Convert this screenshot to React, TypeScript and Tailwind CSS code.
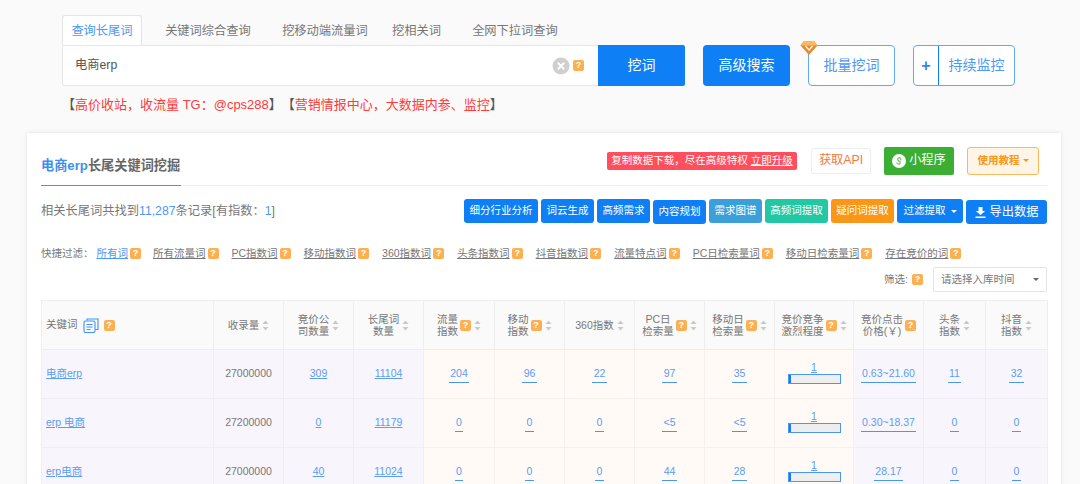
const FONT = { fontFamily: '"Liberation Sans", "Noto Sans CJK SC", sans-serif' }

const tabs = ["关键词综合查询", "挖移动端流量词", "挖相关词", "全网下拉词查询"]

const tools = [
  { label: "细分行业分析", cls: "w-[74px] bg-[#0f7ff5]" },
  { label: "词云生成", cls: "w-[53px] bg-[#0f7ff5]" },
  { label: "高频需求", cls: "w-[53px] bg-[#0f7ff5]" },
  { label: "内容规划", cls: "w-[53px] bg-[#0f7ff5] mt-px" },
  { label: "需求图谱", cls: "w-[53px] bg-[#3b9fd9]" },
  { label: "高频词提取", cls: "w-[63px] bg-[#22c7a3]" },
  { label: "疑问词提取", cls: "w-[63px] bg-[#fb9617]" },
]

const quick = [
  "所有流量词",
  "PC指数词",
  "移动指数词",
  "360指数词",
  "头条指数词",
  "抖音指数词",
  "流量特点词",
  "PC日检索量词",
  "移动日检索量词",
  "存在竞价的词",
]

const columns = [
  { w: "w-[172px]", lines: ["关键词"] },
  { w: "w-[70px]", lines: ["收录量"], sort: true },
  { w: "w-[70px]", lines: ["竞价公", "司数量"], sort: true },
  { w: "w-[70px]", lines: ["长尾词", "数量"], sort: true },
  { w: "w-[71px]", lines: ["流量", "指数"], q: true, sort: true },
  { w: "w-[70px]", lines: ["移动", "指数"], q: true, sort: true },
  { w: "w-[70px]", lines: ["360指数"], sort: true },
  { w: "w-[70px]", lines: ["PC日", "检索量"], q: true, sort: true },
  { w: "w-[70px]", lines: ["移动日", "检索量"], q: true, sort: true },
  { w: "w-[79px]", lines: ["竞价竞争", "激烈程度"], q: true, sort: true },
  { w: "w-[70px]", lines: ["竞价点击", "价格(￥)"], q: true },
  { w: "w-[62px]", lines: ["头条", "指数"], sort: true },
  { w: "w-[62px]", lines: ["抖音", "指数"], sort: true },
]

const rows = [
  { name: "电商erp", total: "27000000", bid: "309", long: "11104", idx: ["204", "96", "22", "97", "35"], price: "0.63~21.60", tail: ["11", "32"] },
  { name: "erp 电商", total: "27200000", bid: "0", long: "11179", idx: ["0", "0", "0", "<5", "<5"], price: "0.30~18.37", tail: ["0", "0"] },
  { name: "erp电商", total: "27000000", bid: "40", long: "11024", idx: ["0", "0", "0", "44", "28"], price: "28.17", tail: ["0", "0"] },
]

function Q({ className = "" }: { className?: string }) {
  return (
    <span className={"inline-flex h-[11px] w-[11px] shrink-0 items-center justify-center rounded-[2px] bg-[#fdb052] text-[9px] font-bold leading-none text-white " + className}>
      ?
    </span>
  )
}

function Sort() {
  return (
    <svg width="7" height="11" viewBox="0 0 7 11" className="ml-px shrink-0">
      <path d="M3.5 0.5 L6.5 4 H0.5 Z" fill="#c8c8c8" />
      <path d="M3.5 10.5 L6.5 7 H0.5 Z" fill="#c8c8c8" />
    </svg>
  )
}

function Num({ value }: { value: string }) {
  return <span className="inline-block border-b border-[#4b97f0] px-[1.5px] pb-[2px] leading-[13px] text-[#5a9df5]">{value}</span>
}

function Bar() {
  return (
    <div className="mx-auto flex w-[53px] flex-col items-center pb-[3px]">
      <span className="leading-[12px] text-[#5a9df5] underline">1</span>
      <div className="mt-px h-[10px] w-[53px] border border-[#4b97f0] bg-[#eeeeee]">
        <div className="h-full w-[2px] bg-[#0f7ff5]" />
      </div>
    </div>
  )
}

export default function App() {
  return (
    <div className="h-[484px] w-[1080px] overflow-hidden bg-[#fafafa] pt-[15px]" style={FONT}>
      <div className="flex items-start pl-[62px]">
        <div className="w-[623px]">
          <div className="flex h-[30px] text-[12.25px] text-[#777777]">
            <div className="flex w-[80px] items-center justify-center rounded-t-[3px] border border-b-0 border-[#e4e4e4] bg-white pt-[2px] text-[#4d97f5]">查询长尾词</div>
            <div className="flex w-[132px] items-center justify-center pt-[2px]">{tabs[0]}</div>
            <div className="flex w-[102px] items-center justify-center pt-[2px]">{tabs[1]}</div>
            <div className="flex w-[81px] items-center justify-center pt-[2px]">{tabs[2]}</div>
            <div className="flex w-[116px] items-center justify-center pt-[2px]">{tabs[3]}</div>
          </div>
          <div className="flex h-[41px]">
            <div className="flex w-[536px] items-center rounded-l-[2px] border border-r-0 border-[#e6e6e6] bg-white pl-[12px] pr-[14px] text-[12.25px] text-[#555555]">
              <span className="flex-1">电商erp</span>
              <svg width="18" height="18" viewBox="0 0 18 18">
                <circle cx="9" cy="9" r="8.5" fill="#cfcfcf" />
                <path d="M5.8 5.8 L12.2 12.2 M12.2 5.8 L5.8 12.2" stroke="#fff" strokeWidth="2" />
              </svg>
              <Q className="ml-[3px] mb-[1px]" />
            </div>
            <button className="w-[87px] rounded-r-[2px] bg-[#0f7ff5] text-[14px] text-white">挖词</button>
          </div>
        </div>
        <button className="ml-[18px] mt-[30px] h-[41px] w-[87px] rounded-[4px] bg-[#0f7ff5] text-[14px] text-white">高级搜索</button>
        <div className="relative ml-[18px] mt-[30px]">
          <svg width="18" height="16" viewBox="0 0 18 16" className="absolute -left-[8px] -top-[5px]">
            <path d="M4 1 H14 L17.5 5.5 L9 15 L0.5 5.5 Z" fill="#ea8a2c" />
            <path d="M4 1 H14 L17.5 5.5 H0.5 Z" fill="#f9b95c" />
            <path d="M5.5 6 L9 10 L12.5 6" fill="none" stroke="#fff" strokeWidth="1.2" />
          </svg>
          <button className="h-[41px] w-[87px] rounded-[4px] border border-[#63a8f7] bg-white text-[14px] text-[#4d97f5]">批量挖词</button>
        </div>
        <div className="ml-[18px] mt-[30px] flex h-[41px] w-[102px] rounded-[4px] border border-[#63a8f7] bg-white text-[14px] text-[#4d97f5]">
          <span className="flex w-[25px] items-center justify-center border-r border-[#0f7ff5] text-[16px] font-bold text-[#2f86ee]">+</span>
          <span className="flex flex-1 items-center justify-center">持续监控</span>
        </div>
      </div>

      <div className="ml-[62px] mt-[9px] h-[19px] whitespace-nowrap text-[13px] leading-[19px] text-[#ff3b3b] [text-spacing-trim:space-all]">
        <span className="text-[#555555]">【</span>高价收站，收流量 TG：@cps288<span className="text-[#555555]">】【</span>营销情报中心，大数据内参、监控<span className="text-[#555555]">】</span>
      </div>

      <div className="ml-[27px] mt-[19px] h-[360px] w-[1034px] bg-white px-[14px] shadow-[0_0_4px_rgba(0,0,0,0.1)]">
        <div className="flex h-[53px] items-center justify-between border-b border-[#eeeeee]">
          <div className="-mb-px flex h-[53px] w-[140px] shrink-0 items-center whitespace-nowrap border-b border-[#3f93f3] pt-[14px] text-[13.2px] font-bold text-[#666666]">
            <span className="text-[#3f8ff0]">电商erp</span>长尾关键词挖掘
          </div>
          <div className="flex items-center pr-[8px] pt-[3px]">
            <div className="flex h-[18px] w-[190px] shrink-0 items-center justify-center rounded-[2px] bg-[#ff4f5e] text-[10.5px] text-white">
              复制数据下载，尽在高级特权&nbsp;<span className="underline">立即升级</span>
            </div>
            <div className="ml-[14px] flex h-[26px] w-[60px] items-center justify-center rounded-[2px] border border-[#eeeeee] text-[12.25px] text-[#f5793b]">获取API</div>
            <div className="ml-[13px] flex h-[28px] w-[70px] items-center justify-center gap-[3px] rounded-[2px] bg-[#3bae34] text-[12.25px] text-white">
              <svg width="14" height="14" viewBox="0 0 14 14">
                <circle cx="7" cy="7" r="7" fill="#fff" />
                <path d="M5 8.5 A1.6 1.6 0 1 0 6.6 7 V6.8 A1.6 1.6 0 1 1 8.5 6.4" fill="none" stroke="#7cc276" strokeWidth="1.3" />
              </svg>
              小程序
            </div>
            <div className="ml-[13px] flex h-[28px] w-[72px] items-center justify-center gap-[3px] rounded-[3px] border border-[#fbb75e] bg-[#fff5e6] text-[10.5px] font-bold text-[#fb9617]">
              使用教程
              <span className="h-0 w-0 border-x-[3px] border-t-[3px] border-x-transparent border-t-[#fb9617]" />
            </div>
          </div>
        </div>

        <div className="mt-[13px] flex h-[26px] items-start justify-between">
          <div className="pt-[4px] text-[12.25px] leading-[17px] text-[#777777]">
            相关长尾词共找到<span className="text-[#4d97f5]">11,287</span>条记录[有指数：<span className="text-[#4d97f5]">1</span>]
          </div>
          <div className="flex items-start gap-[3px] text-white">
            {tools.map((t) => (
              <button key={t.label} className={"h-[24px] rounded-[3px] text-[10.5px] " + t.cls}>{t.label}</button>
            ))}
            <button className="flex h-[24px] w-[66px] items-center justify-center gap-[5px] rounded-[3px] bg-[#0f7ff5] text-[10.5px]">
              过滤提取
              <span className="h-0 w-0 border-x-[3.5px] border-t-[3.5px] border-x-transparent border-t-white" />
            </button>
            <button className="mt-px flex h-[24px] w-[81px] items-center justify-center gap-[4px] rounded-[3px] bg-[#0f7ff5] text-[12.25px]">
              <svg width="11" height="11" viewBox="0 0 11 11">
                <path d="M3.5 0 H7.5 V4 H10.2 L5.5 8 L0.8 4 H3.5 Z M0.5 9.4 H10.5 V11 H0.5 Z" fill="#fff" />
              </svg>
              导出数据
            </button>
          </div>
        </div>

        <div className="mt-[22px] flex h-[14px] items-center text-[10.5px] text-[#777777]">
          <span className="mr-[3px]">快捷过滤：</span>
          <span className="text-[#4d97f5] underline">所有词</span>
          <Q className="ml-[2px] mr-[12px] mb-[2px]" />
          {quick.map((q) => (
            <span key={q} className="contents">
              <span className="underline">{q}</span>
              <Q className="ml-[2px] mr-[13px] mb-[2px]" />
            </span>
          ))}
        </div>

        <div className="mt-[6px] flex h-[25px] items-center justify-end text-[10.5px] text-[#777777]">
          <span>筛选:</span>
          <Q className="ml-[4px] mr-[10px]" />
          <div className="flex h-[25px] w-[114px] items-center justify-between rounded-[2px] border border-[#e4e4e4] bg-white pl-[7px] pr-[7px]">
            请选择入库时间
            <span className="h-0 w-0 border-x-[3.5px] border-t-[3.5px] border-x-transparent border-t-[#666666]" />
          </div>
        </div>

        <table className="mt-[8px] w-[1006px] table-fixed border-collapse text-[10.5px] text-[#777777]">
          <colgroup>
            {columns.map((c, i) => <col key={i} className={c.w} />)}
          </colgroup>
          <thead>
            <tr className="h-[49px] bg-[#fafafa]">
              {columns.map((c, i) => (
                <th key={i} className="border border-[#eeeeee] p-0 font-normal">
                  {i === 0 ? (
                    <div className="flex items-center pl-[4px]">
                      <span>关键词</span>
                      <svg width="16" height="15" viewBox="0 0 16 15" className="ml-[5px]">
                        <path d="M4 2.5 V1 H15 V11.5 H12.5" fill="none" stroke="#3f93f3" strokeWidth="1.1" />
                        <rect x="1" y="3" width="11" height="11.5" rx="1.5" fill="none" stroke="#3f93f3" strokeWidth="1.1" />
                        <path d="M3.5 6.5 H9.5 M3.5 9 H9.5 M3.5 11.5 H7.5" stroke="#3f93f3" strokeWidth="1" />
                      </svg>
                      <Q className="ml-[5px]" />
                    </div>
                  ) : (
                    <div className="flex items-center justify-center gap-[2px] leading-[12px]">
                      <span className="whitespace-nowrap">
                        {c.lines.map((l) => <span key={l} className="block">{l}</span>)}
                      </span>
                      {c.q && <Q />}
                      {c.sort && <Sort />}
                    </div>
                  )}
                </th>
              ))}
            </tr>
          </thead>
          <tbody>
            {rows.map((r) => (
              <tr key={r.name} className="h-[49px] text-center">
                <td className="border border-[#f0eef2] bg-[#f9f5fd] pl-[4px] text-left text-[#5a9df5] underline">{r.name}</td>
                <td className="border border-[#f0eef2] bg-[#f9f5fd]">{r.total}</td>
                <td className="border border-[#f0eef2] bg-[#f9f5fd] text-[#5a9df5] underline">{r.bid}</td>
                <td className="border border-[#f0eef2] bg-[#f9f5fd] text-[#5a9df5] underline">{r.long}</td>
                {r.idx.map((v, i) => (
                  <td key={i} className="border border-[#f3f0ee] bg-[#fffaf5]"><Num value={v} /></td>
                ))}
                <td className="border border-[#f3f0ee] bg-[#fffaf5]"><Bar /></td>
                <td className="border border-[#f0eef2] bg-[#f9f5fd]"><Num value={r.price} /></td>
                {r.tail.map((v, i) => (
                  <td key={i} className="border border-[#f0eef2] bg-[#f9f5fd]"><Num value={v} /></td>
                ))}
              </tr>
            ))}
          </tbody>
        </table>
      </div>
    </div>
  )
}
